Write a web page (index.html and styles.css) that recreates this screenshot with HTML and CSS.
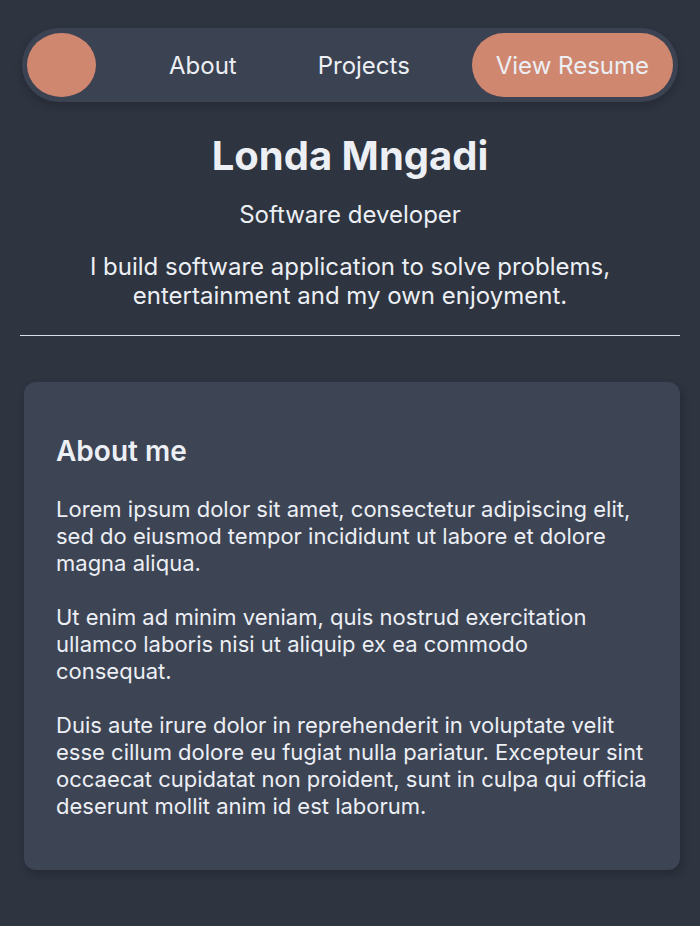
FILE: index.html
```html
<!DOCTYPE html>
<html lang="en">
<head>
<meta charset="utf-8">
<title>Londa Mngadi</title>
<link rel="stylesheet" href="styles.css">
</head>
<body>
<header class="nav">
  <div class="logo"></div>
  <a class="nav-link first" href="#about">About</a>
  <a class="nav-link" href="#projects">Projects</a>
  <a class="resume" href="#resume">View Resume</a>
</header>
<section class="hero">
  <h1 class="name">Londa Mngadi</h1>
  <p class="role">Software developer</p>
  <p class="tagline">I build software application to solve problems,<br>entertainment and my own enjoyment.</p>
</section>
<hr class="divider">
<section class="card" id="about">
  <h2 class="card-title">About me</h2>
  <p class="card-text">Lorem ipsum dolor sit amet, consectetur adipiscing elit, sed do eiusmod tempor incididunt ut labore et dolore magna aliqua.</p>
  <p class="card-text">Ut enim ad minim veniam, quis nostrud exercitation ullamco laboris nisi ut aliquip ex ea commodo consequat.</p>
  <p class="card-text">Duis aute irure dolor in reprehenderit in voluptate velit esse cillum dolore eu fugiat nulla pariatur. Excepteur sint occaecat cupidatat non proident, sunt in culpa qui officia deserunt mollit anim id est laborum.</p>
</section>
</body>
</html>
```
FILE: styles.css
```css
* { box-sizing: border-box; }
html, body { margin: 0; }
body {
  background: #2E3440;
  color: #ECEFF4;
  font-family: Inter, "Noto Sans", sans-serif;
  font-weight: 400;
  padding: 28px 20px 40px;
}
.nav {
  display: flex;
  align-items: center;
  margin: 0 2px;
  height: 74px;
  padding: 5px;
  border-radius: 999px;
  background: #3B4252;
  box-shadow: 0 4px 8px rgba(0, 0, 0, 0.18);
}
.logo {
  width: 69px;
  height: 64px;
  border-radius: 50%;
  background: #D08770;
  flex: none;
}
.nav-link {
  color: #ECEFF4;
  text-decoration: none;
  font-size: 24px;
  margin-left: 81px;
}
.nav-link.first { margin-left: 73px; }
.resume {
  margin-left: auto;
  height: 64px;
  display: flex;
  align-items: center;
  padding: 0 24px;
  border-radius: 32px;
  background: #D08770;
  color: #ECEFF4;
  text-decoration: none;
  font-size: 24px;
}
.hero {
  text-align: center;
}
.name {
  margin: 30px 0 0;
  font-size: 40px;
  font-weight: 700;
  line-height: 48px;
}
.role {
  margin: 20px 0 0;
  font-size: 24px;
  line-height: 30px;
}
.tagline {
  margin: 22px 0 0;
  font-size: 24px;
  line-height: 29px;
}
.divider {
  border: none;
  border-top: 1px solid #D8DEE9;
  margin: 25px 0 0;
}
.card {
  margin: 46px 0 0 4px;
  background: #3D4454;
  border-radius: 12px;
  padding: 52px 32px 50px;
  box-shadow: 2px 4px 8px rgba(0, 0, 0, 0.2);
}
.card-title {
  margin: 0 0 28px;
  font-size: 28px;
  font-weight: 600;
  line-height: 34px;
}
.card-text {
  margin: 0 0 27px;
  font-size: 22px;
  line-height: 27px;
}
.card-text:last-child { margin-bottom: 0; }
```
